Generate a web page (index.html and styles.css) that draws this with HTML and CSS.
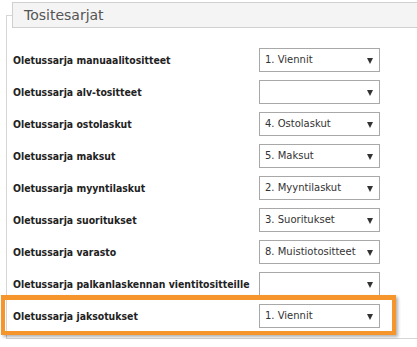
FILE: index.html
```html
<!DOCTYPE html>
<html lang="fi">
<head>
  <meta charset="UTF-8">
  <title>Tositesarjat</title>
  <link rel="stylesheet" href="styles.css">
</head>
<body>

<fieldset class="panel">
  <legend>Tositesarjat</legend>

  <div class="row">
    <label>Oletussarja manuaalitositteet</label>
    <div class="select">1. Viennit</div>
  </div>
  <div class="row">
    <label>Oletussarja alv-tositteet</label>
    <div class="select"></div>
  </div>
  <div class="row">
    <label>Oletussarja ostolaskut</label>
    <div class="select">4. Ostolaskut</div>
  </div>
  <div class="row">
    <label>Oletussarja maksut</label>
    <div class="select">5. Maksut</div>
  </div>
  <div class="row">
    <label>Oletussarja myyntilaskut</label>
    <div class="select">2. Myyntilaskut</div>
  </div>
  <div class="row">
    <label>Oletussarja suoritukset</label>
    <div class="select">3. Suoritukset</div>
  </div>
  <div class="row">
    <label>Oletussarja varasto</label>
    <div class="select">8. Muistiotositteet</div>
  </div>
  <div class="row">
    <label>Oletussarja palkanlaskennan vientitositteille</label>
    <div class="select"></div>
  </div>
  <!-- korostettu rivi -->
  <div class="row highlight">
    <label>Oletussarja jaksotukset</label>
    <div class="select">1. Viennit</div>
  </div>
</fieldset>

</body>
</html>
```

FILE: styles.css
```css
body {
  margin: 0;
  background: #fff;
  font-family: 'DejaVu Sans', Verdana, sans-serif;
  overflow: hidden;
}
.panel {
  width: 480px;
  margin: 2px 0 0 6px;
  padding: 16px 0 6px 5px;
  border: 1px solid #d6d6d6;
  border-right: none;
}
.panel legend {
  width: 460px;
  box-sizing: border-box;
  margin: 0;
  padding: 0 0 0 11px;
  background: #f4f4f4;
  border: 1px solid #d0d0d0;
  color: #555;
  font-size: 14px;
  line-height: 24px;
}
.row {
  position: relative;
  display: flex;
  align-items: center;
  width: 368px;
  height: 32px;
}
.row label {
  width: 247px;
  padding-left: 1px;
  box-sizing: border-box;
  font-family: 'DejaVu Sans Condensed', 'DejaVu Sans', sans-serif;
  font-size: 10.4px;
  font-weight: bold;
  color: #222;
  white-space: nowrap;
}
.select {
  position: relative;
  width: 121px;
  height: 24px;
  box-sizing: border-box;
  border: 1px solid #a8a8a8;
  background: #fff;
  padding-left: 5px;
  font-size: 10px;
  line-height: 22px;
  color: #333;
}
.select::after {
  content: "";
  position: absolute;
  right: 6px;
  top: 9px;
  border-left: 3.5px solid transparent;
  border-right: 3.5px solid transparent;
  border-top: 6px solid #333;
}
/* oranssi korostus */
.highlight::after {
  content: "";
  position: absolute;
  left: -11px;
  right: -16px;
  top: -5px;
  bottom: -3px;
  border: 4px solid #f7952d;
  border-top-width: 5px;
  box-shadow: 2px 2px 3px rgba(0,0,0,0.3);
}
```
